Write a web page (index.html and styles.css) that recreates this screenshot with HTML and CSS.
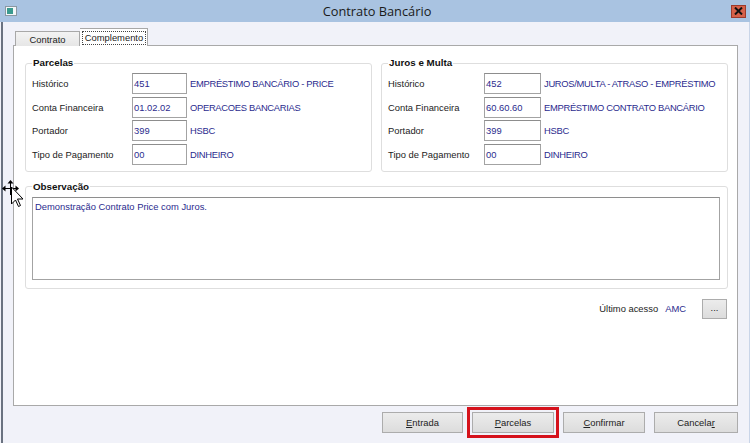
FILE: index.html
```html
<!DOCTYPE html>
<html lang="pt-BR">
<head>
<meta charset="utf-8">
<title>Contrato Bancário</title>
<link rel="stylesheet" href="styles.css">
</head>
<body>
<div class="window">
  <div class="titlebar">
    <div class="app-icon"><span></span></div>
    <div class="title">Contrato Bancário</div>
    <div class="close">
      <svg width="9" height="8" viewBox="0 0 9 8"><path d="M1 0.5 L8 7.5 M8 0.5 L1 7.5" stroke="#111" stroke-width="2"/></svg>
    </div>
  </div>
  <div class="client">
    <div class="tabs">
      <div class="tab">Contrato</div>
      <div class="tab active"><span class="focus">Complemento</span></div>
    </div>
    <div class="panel">
      <div class="groups">
        <fieldset class="group group-left">
          <legend>Parcelas</legend>
          <div class="rows">
            <div class="row"><span class="label">Histórico</span><span class="field">451</span><span class="desc">EMPRÉSTIMO BANCÁRIO - PRICE</span></div>
            <div class="row"><span class="label">Conta Financeira</span><span class="field">01.02.02</span><span class="desc">OPERACOES BANCARIAS</span></div>
            <div class="row"><span class="label">Portador</span><span class="field">399</span><span class="desc">HSBC</span></div>
            <div class="row"><span class="label">Tipo de Pagamento</span><span class="field">00</span><span class="desc">DINHEIRO</span></div>
          </div>
        </fieldset>
        <fieldset class="group group-right">
          <legend>Juros e Multa</legend>
          <div class="rows">
            <div class="row"><span class="label">Histórico</span><span class="field">452</span><span class="desc">JUROS/MULTA - ATRASO - EMPRÉSTIMO</span></div>
            <div class="row"><span class="label">Conta Financeira</span><span class="field">60.60.60</span><span class="desc">EMPRÉSTIMO CONTRATO BANCÁRIO</span></div>
            <div class="row"><span class="label">Portador</span><span class="field">399</span><span class="desc">HSBC</span></div>
            <div class="row"><span class="label">Tipo de Pagamento</span><span class="field">00</span><span class="desc">DINHEIRO</span></div>
          </div>
        </fieldset>
      </div>
      <fieldset class="group group-obs">
        <legend>Observação</legend>
        <div class="memo">Demonstração Contrato Price com Juros.</div>
      </fieldset>
      <div class="access">
        <span class="access-label">Último acesso</span>
        <span class="access-user">AMC</span>
        <span class="btn btn-dots">...</span>
      </div>
    </div>
    <div class="buttons">
      <span class="btn btn-entrada"><u>E</u>ntrada</span>
      <span class="btn btn-parcelas"><u>P</u>arcelas</span>
      <span class="btn btn-confirmar"><u>C</u>onfirmar</span>
      <span class="btn btn-cancelar">Cancela<u>r</u></span>
    </div>
  </div>
  <svg class="cursor" width="24" height="30" viewBox="0 0 24 30">
    <g stroke="#000" stroke-width="1" fill="none">
      <path d="M8.5 2 V15 M2 8.5 H15"/>
    </g>
    <g fill="#000">
      <path d="M8.5 0 L5.5 3.5 H11.5 Z"/>
      <path d="M0 8.5 L3.5 5.5 V11.5 Z"/>
      <path d="M17 8.5 L13.5 5.5 V11.5 Z"/>
    </g>
    <path d="M9.5 7 V24 L13.5 20 L16.5 26.5 L18.5 25.5 L15.5 19 L21 19 Z" fill="#fff" stroke="#000" stroke-width="1" stroke-linejoin="round"/>
  </svg>
</div>
</body>
</html>
```
FILE: styles.css
```css
* { box-sizing: border-box; }
html, body { margin: 0; padding: 0; }
body {
  width: 750px;
  height: 443px;
  overflow: hidden;
  background: #f1f2f9;
  font-family: "Liberation Sans", Arial, sans-serif;
  font-size: 9.4px;
  color: #1c1c1c;
}
.window {
  position: relative;
  width: 750px;
  height: 443px;
  display: flex;
  flex-direction: column;
  background: #f1f2f9;
}
.titlebar {
  height: 22px;
  flex: none;
  background: #a9c3e1;
  display: flex;
  align-items: center;
  padding: 0 4px 0 5px;
}
.app-icon {
  width: 12px;
  height: 10px;
  background: #f4f6f8;
  border: 1px solid #8a98a2;
  display: flex;
  padding: 1px;
}
.app-icon span {
  width: 6px;
  background: #3a9a8f;
}
.title {
  flex: 1;
  text-align: center;
  font-family: "Open Sans", "Noto Sans", sans-serif;
  font-size: 12.8px;
  color: #1a1a1a;
  padding-left: 6px;
}
.close {
  width: 15px;
  height: 13px;
  background: #d6614a;
  border: 1px solid #9c3a2c;
  display: flex;
  align-items: center;
  justify-content: center;
}
.client {
  flex: 1;
  display: flex;
  flex-direction: column;
  margin-left: 1px;
  border-left: 2px solid #6a7280;
  border-right: 1px solid #c9d5e8;
  padding: 7px 11px 0 10px;
  background: #f1f2f9;
}
.tabs {
  height: 17px;
  display: flex;
  align-items: flex-end;
  padding-left: 2px;
  margin-bottom: -1px;
  position: relative;
  z-index: 1;
}
.tab {
  height: 15px;
  width: 65px;
  border: 1px solid #a8a8a8;
  border-bottom: none;
  background: linear-gradient(#f3f3f3, #e6e6e6);
  display: flex;
  align-items: center;
  justify-content: center;
  padding-top: 1px;
}
.tab.active {
  width: 68px;
  height: 18px;
  background: #fff;
  border-left: none;
  padding: 2px 1px 1px 2px;
  align-items: stretch;
}
.focus {
  flex: 1;
  border: 1px dotted #444;
  display: flex;
  align-items: center;
  justify-content: center;
  line-height: 1;
}
.panel {
  height: 361px;
  flex: none;
  background: #fff;
  border: 1px solid #a9a9a9;
  padding: 11px 9px 0 11px;
  display: flex;
  flex-direction: column;
}
.groups {
  display: flex;
  gap: 9px;
}
.group {
  margin: 0;
  min-width: 0;
  border: 1px solid #dedede;
  border-radius: 3px;
  padding: 4px 6px 6px 6px;
}
.group legend {
  font-weight: bold;
  font-size: 9.8px;
  line-height: 12px;
  color: #111;
  padding: 0 1px;
  margin-left: 0;
}
.group-left, .group-right {
  width: 347px;
  flex: none;
}
.rows {
  display: flex;
  flex-direction: column;
  gap: 2.5px;
}
.row {
  height: 21px;
  display: flex;
  align-items: center;
}
.label {
  width: 100px;
  flex: none;
}
.group-right .label { width: 96px; }
.field {
  width: 55px;
  height: 21px;
  flex: none;
  border: 1px solid #a3a3a3;
  border-top-color: #8d8d8d;
  background: #fff;
  color: #2b2b8e;
  display: flex;
  align-items: center;
  padding-left: 1px;
}
.group-right .field { width: 57px; }
.desc {
  color: #2b2b8e;
  padding-left: 3px;
  white-space: nowrap;
  letter-spacing: -0.3px;
}
.group-obs {
  margin-top: 9px;
  width: 703px;
  padding: 4px 7px 8px 6px;
}
.memo {
  height: 83px;
  border: 1px solid #a3a3a3;
  border-top-color: #8e8e8e;
  color: #2b2b8e;
  padding: 3px 2px;
}
.access {
  margin-top: 10px;
  display: flex;
  align-items: center;
  justify-content: flex-end;
  padding-right: 1px;
}
.access-user {
  color: #2b2b8e;
  margin-left: 7px;
  margin-right: 16px;
}
.btn {
  height: 21px;
  display: flex;
  align-items: center;
  justify-content: center;
  border: 1px solid #acacac;
  background: linear-gradient(#ececec, #dcdcdc);
  color: #222;
}
.btn u { text-underline-offset: 1px; }
.btn-dots {
  width: 25px;
  height: 20px;
  padding-bottom: 3px;
}
.buttons {
  margin-top: 6px;
  display: flex;
  justify-content: flex-end;
  gap: 9px;
}
.btn-entrada { width: 81px; }
.btn-parcelas {
  width: 82px;
  outline: 3px solid #d5121c;
  outline-offset: 2px;
}
.btn-confirmar { width: 82px; }
.btn-cancelar { width: 84px; }
.cursor {
  position: absolute;
  left: 2px;
  top: 180px;
}
```
